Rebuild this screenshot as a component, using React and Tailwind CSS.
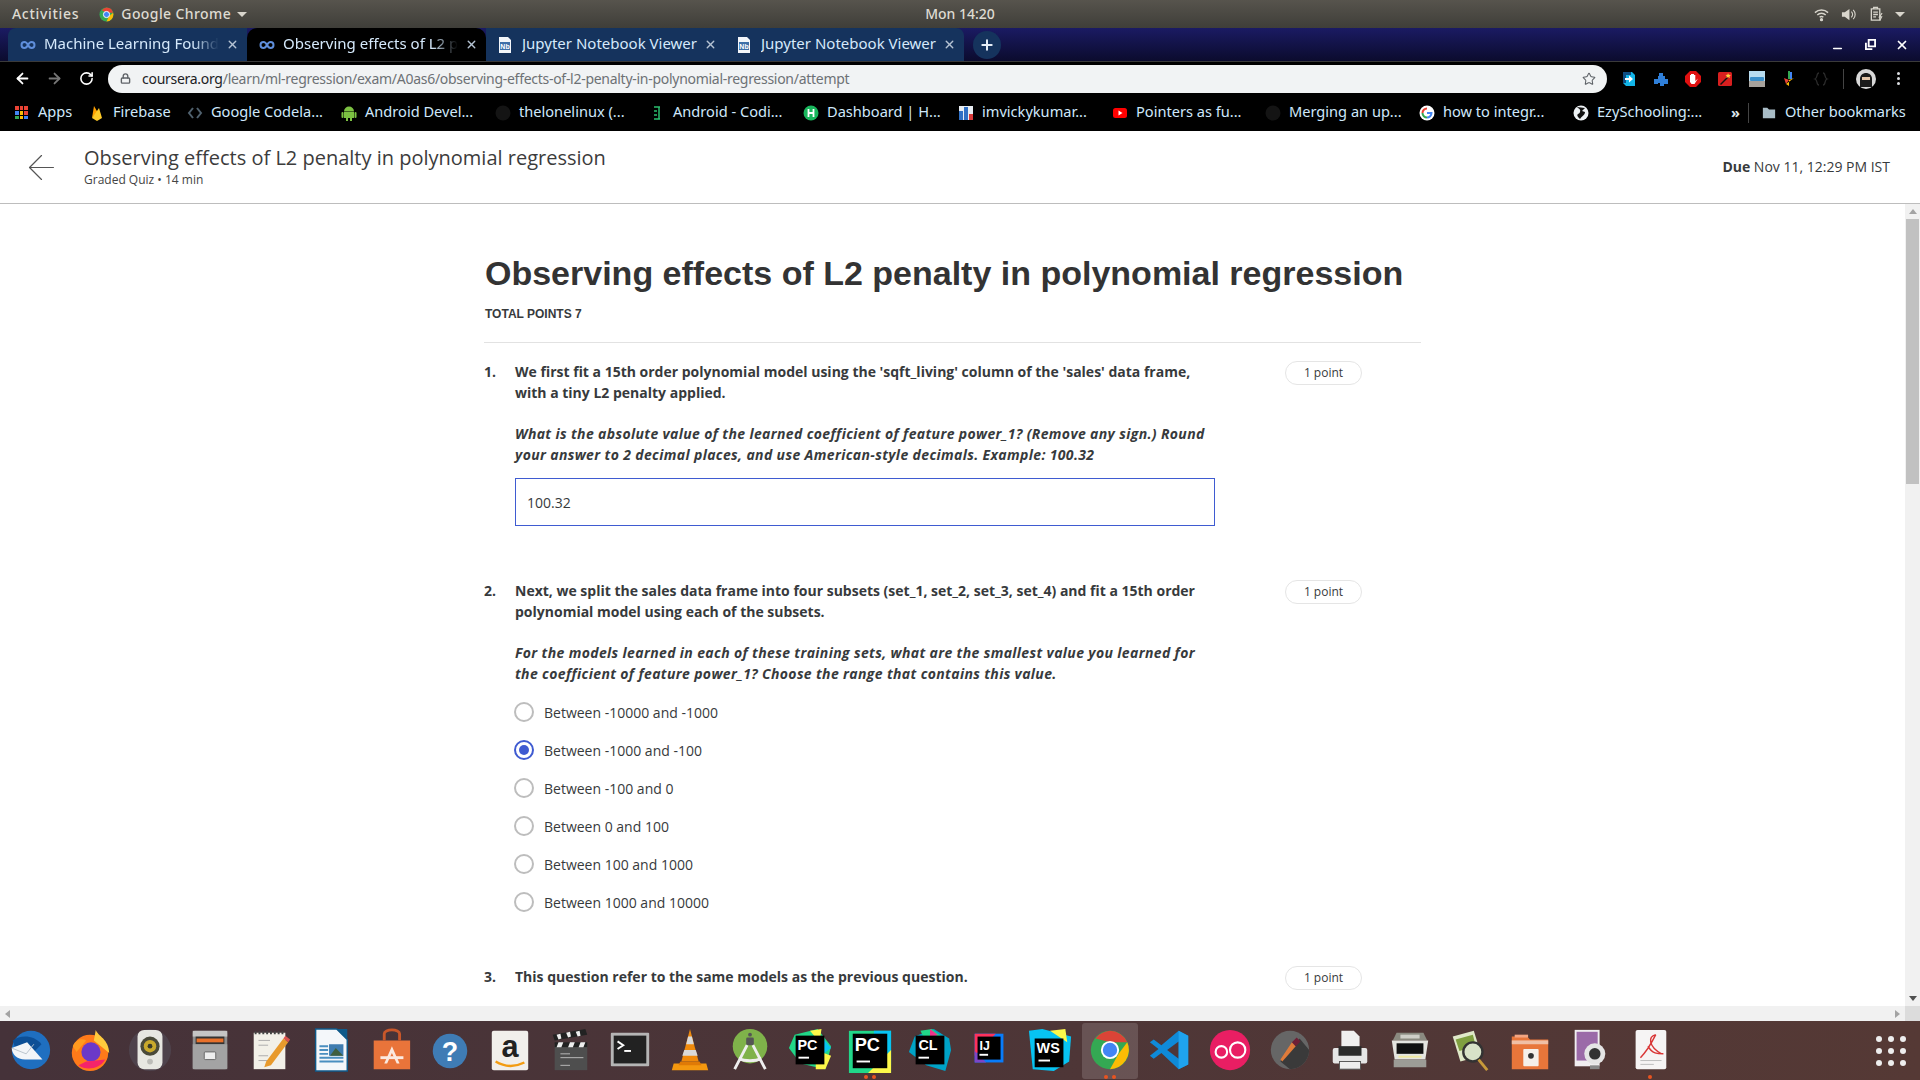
import React from 'react';
import { ArrowLeft, ArrowRight, RotateCw, Lock, Star, X, Plus, Minus } from 'lucide-react';

const bookmarks = [
  { name: 'Apps', icon: 'apps', w: 'w-[74px]', gap: 'gap-[10px]' },
  { name: 'Firebase', icon: 'firebase', w: 'w-[98px]' },
  { name: 'Google Codela...', icon: 'code', w: 'w-[154px]' },
  { name: 'Android Devel...', icon: 'android', w: 'w-[154px]' },
  { name: 'thelonelinux (...', icon: 'github', w: 'w-[154px]' },
  { name: 'Android - Codi...', icon: 'codi', w: 'w-[154px]' },
  { name: 'Dashboard | H...', icon: 'hash', w: 'w-[155px]' },
  { name: 'imvickykumar...', icon: 'bars', w: 'w-[154px]' },
  { name: 'Pointers as fu...', icon: 'youtube', w: 'w-[153px]' },
  { name: 'Merging an up...', icon: 'github', w: 'w-[154px]' },
  { name: 'how to integr...', icon: 'google', w: 'w-[154px]' },
  { name: 'EzySchooling:...', icon: 'globe', w: 'w-[160px]' },
];

const options = ['Between -10000 and -1000', 'Between -1000 and -100', 'Between -100 and 0', 'Between 0 and 100', 'Between 100 and 1000', 'Between 1000 and 10000'];

function CourseraMark() {
  return (
    <svg viewBox="0 0 16 16" className="w-4 h-4 shrink-0" fill="none" stroke="#5f8fdc" strokeWidth="2">
      <path d="M8 8c-1-2-2-3-3.500-3a3 3 0 0 0 0 6C6 11 7 10 8 8c1-2 2-3 3.500-3a3 3 0 0 1 0 6C10 11 9 10 8 8z" />
    </svg>
  );
}

function NotebookMark() {
  return (
    <svg viewBox="0 0 16 16" className="w-4 h-4 shrink-0">
      <path d="M2 0h9l3 3v13H2z" fill="#f3f6fa" />
      <rect x="3" y="5" width="10" height="8" fill="#3e6fa8" />
      <text x="8" y="12" fontSize="7" fontWeight="700" textAnchor="middle" fill="#fff" fontFamily="Liberation Sans">Nb</text>
    </svg>
  );
}

function Tab({ title, active, notebook, fade, rounded }) {
  return (
    <div className={`relative flex items-center h-full w-[239px] shrink-0 ${notebook ? 'pl-[11px]' : 'pl-[12px]'} pr-[8px] ${active ? 'bg-black rounded-t-[10px]' : 'bg-[#15335d]'} ${rounded || ''}`}>
      {notebook ? <NotebookMark /> : <CourseraMark />}
      <span className={`flex-1 min-w-0 overflow-hidden whitespace-nowrap text-[15px] -translate-y-[1px] text-[#d5e9fb] ${notebook ? 'ml-[9px]' : 'ml-[8px]'} ${fade ? '[mask-image:linear-gradient(to_right,black_82%,transparent_96%)]' : ''}`}>{title}</span>
      <X size={13} strokeWidth={2.5} className="text-[#b5c3d3] shrink-0" />
    </div>
  );
}

function BookmarkIcon({ type }) {
  if (type === 'apps') {
    const c = ['#ea4335', '#ea4335', '#ea4335', '#4285f4', '#fbbc05', '#ea4335', '#34a853', '#fbbc05', '#4285f4'];
    return (
      <div className="grid grid-cols-3 gap-[1px] w-[13px] h-[13px] shrink-0">
        {c.map((col, i) => <div key={i} style={{ background: col }} />)}
      </div>
    );
  }
  const paths = {
    firebase: <><path d="M3 13 5 1l3.500 6z" fill="#ffa000" /><path d="M3 13 10 3l3 10-5 3z" fill="#ffca28" /></>,
    code: <path d="M6 3 2 8l4 5M10 3l4 5-4 5" fill="none" stroke="#50616e" strokeWidth="2" />,
    android: <><path d="M3 6.500a5 5 0 0 1 10 0z" fill="#7cc142" /><rect x="3" y="7" width="10" height="6" fill="#7cc142" /><rect x="0.500" y="7" width="2" height="6" rx="1" fill="#7cc142" /><rect x="13.500" y="7" width="2" height="6" rx="1" fill="#7cc142" /><rect x="5" y="12" width="2" height="4" fill="#7cc142" /><rect x="9" y="12" width="2" height="4" fill="#7cc142" /></>,
    github: <circle cx="8" cy="8" r="7.500" fill="#141414" />,
    codi: <path d="M5 2h6M10 2v12M5 14h6M5 6h3M5 10h3" fill="none" stroke="#2bbd6e" strokeWidth="1.500" />,
    hash: <><circle cx="8" cy="8" r="7.500" fill="#19b65c" /><path d="M5.500 4v8M10.500 4v8M5 8h6" stroke="#fff" strokeWidth="1.800" /></>,
    bars: <><rect x="1" y="1" width="14" height="14" fill="#e8edf3" /><rect x="1" y="6" width="4" height="9" fill="#2f6fc4" /><rect x="6" y="2" width="4" height="13" fill="#2f6fc4" /><rect x="11" y="9" width="4" height="6" fill="#d93a3a" /></>,
    youtube: <><rect x="1" y="3" width="14" height="10" rx="2.500" fill="#f00" /><path d="M6.500 5.500v5l4-2.500z" fill="#fff" /></>,
    google: <><circle cx="8" cy="8" r="7.500" fill="#fff" /><path d="M8 3.500A4.500 4.500 0 0 0 3.500 8" stroke="#ea4335" strokeWidth="2" fill="none" /><path d="M3.500 8A4.500 4.500 0 0 0 8 12.500" stroke="#34a853" strokeWidth="2" fill="none" /><path d="M8 12.500A4.500 4.500 0 0 0 12.500 8H8" stroke="#4285f4" strokeWidth="2" fill="none" /></>,
    globe: <><circle cx="8" cy="8" r="7.500" fill="#eef2f5" /><path d="M4 2c2 2 4 2 3 5S3 8 5 12l2 2c2-3 5-4 5-7L9 6l3-3z" fill="#111" /></>,
  };
  return <svg viewBox="0 0 16 16" className="w-4 h-4 shrink-0">{paths[type]}</svg>;
}

function ExtIcon({ children }) {
  return <svg viewBox="0 0 16 16" className="w-4 h-4">{children}</svg>;
}

function TopBar() {
  return (
    <div className="relative h-[28px] shrink-0 flex items-center bg-gradient-to-b from-[#57544d] to-[#3f3e39] text-[14px] font-medium text-[#dedbd2] font-['Noto_Sans',sans-serif]">
      <span className="ml-[12px] tracking-[0.7px] -translate-y-[1px]">Activities</span>
      <svg viewBox="0 0 16 16" className="w-[15px] h-[15px] ml-[20px]">
        <circle cx="8" cy="8" r="7.500" fill="#34a853" />
        <path d="M8 .500A7.500 7.500 0 0 1 15 6H8L3 3.500A7.500 7.500 0 0 1 8 .500z" fill="#ea4335" />
        <path d="M15 6a7.500 7.500 0 0 1-7 9.500L10.500 10z" fill="#fbbc05" />
        <circle cx="8" cy="8" r="3.300" fill="#4285f4" stroke="#fff" />
      </svg>
      <span className="ml-[7px] tracking-[0.4px] -translate-y-[1px]">Google Chrome</span>
      <div className="ml-[6px] w-0 h-0 border-x-[5px] border-x-transparent border-t-[5px] border-t-[#d8d5cc]" />
      <span className="absolute left-1/2 -translate-x-1/2 -translate-y-[1px]">Mon 14:20</span>
      <div className="ml-auto flex items-center text-[#d8d5cc]">
        <svg viewBox="0 0 16 16" className="w-[15px] h-[15px]" fill="none" stroke="currentColor" strokeWidth="1.500">
          <path d="M1 6a10 10 0 0 1 14 0M3.500 8.500a6.500 6.500 0 0 1 9 0M6 11a3 3 0 0 1 4 0" /><circle cx="8" cy="13.500" r="1" fill="currentColor" />
        </svg>
        <svg viewBox="0 0 16 16" className="w-[15px] h-[15px] ml-[12px]" fill="currentColor">
          <path d="M1 5.500h3L9 2v12L4 10.500H1z" /><path d="M11 5a4 4 0 0 1 0 6M13 3a7 7 0 0 1 0 10" fill="none" stroke="currentColor" strokeWidth="1.200" />
        </svg>
        <svg viewBox="0 0 16 16" className="w-[15px] h-[16px] ml-[13px]" fill="none" stroke="currentColor" strokeWidth="1.400">
          <path d="M2.500 2.500h9v12h-9zM5 1h4v1.500H5zM4.500 6h5M4.500 8.500h5M4.500 11h3" /><path d="M14 7 11 11h2.500L11.500 15" strokeWidth="1.200" />
        </svg>
        <div className="ml-[11px] mr-[15px] w-0 h-0 border-x-[5px] border-x-transparent border-t-[5px] border-t-[#d8d5cc]" />
      </div>
    </div>
  );
}

function TabStrip() {
  return (
    <div className="h-[33px] shrink-0 flex items-center bg-gradient-to-b from-[#1b1b63] to-[#0b0b2e] font-['Noto_Sans',sans-serif]">
      <div className="w-[8px] h-full" />
      <Tab title="Machine Learning Foundat" fade rounded="rounded-tl-lg" />
      <Tab title="Observing effects of L2 penalt" active fade />
      <Tab title="Jupyter Notebook Viewer" notebook />
      <div className="flex items-center h-full">
        <div className="w-px h-[20px] bg-[#5b6f8c] -ml-px" />
      </div>
      <Tab title="Jupyter Notebook Viewer" notebook rounded="rounded-tr-lg" />
      <div className="w-[28px] h-[28px] rounded-full bg-[#15335d] flex items-center justify-center ml-[9px]">
        <Plus size={16} strokeWidth={3} className="text-[#e6eef7]" />
      </div>
      <div className="ml-auto flex items-center text-white">
        <Minus size={13} strokeWidth={3} className="translate-y-[4px]" />
        <svg viewBox="0 0 12 12" className="w-[11px] h-[11px] ml-[21px]" fill="none" stroke="currentColor" strokeWidth="2"><path d="M4 1h7v7H4zM1 4v7h7" /></svg>
        <X size={14} strokeWidth={3} className="ml-[19px] mr-[11px]" />
      </div>
    </div>
  );
}

function Toolbar() {
  return (
    <div className="h-[34px] shrink-0 bg-black border-t border-t-[#3a3a3a] flex items-center font-['Noto_Sans',sans-serif]">
      <ArrowLeft size={17} strokeWidth={2.5} className="text-white ml-[14px]" />
      <ArrowRight size={17} strokeWidth={2.5} className="text-[#777] ml-[15px]" />
      <RotateCw size={15} strokeWidth={2.5} className="text-white ml-[16px]" />
      <div className="ml-[14px] w-[1499px] h-[28px] rounded-full bg-[#f1f3f4] flex items-center pl-[12px] pr-[11px]">
        <Lock size={11} strokeWidth={3} className="text-[#5f6368]" />
        <span className="ml-[11px] text-[14px] tracking-[-0.28px] whitespace-nowrap">
          <span className="text-[#202124]">coursera.org</span>
          <span className="text-[#6d7175]">/learn/ml-regression/exam/A0as6/observing-effects-of-l2-penalty-in-polynomial-regression/attempt</span>
        </span>
        <Star size={14} strokeWidth={1.8} className="ml-auto text-[#5f6368]" />
      </div>
      <div className="ml-[14px] flex items-center gap-[16px]">
        <ExtIcon><path d="M2 1h9l3 3v11H5l-3-3z" fill="#12b5e8" /><path d="M2 1h8v3H5v8H2z" fill="#0f4c81" /><path d="M4 7h4V4.500L12 8l-4 3.500V9H4z" fill="#fff" /></ExtIcon>
        <ExtIcon><path d="M6 2h4v3h2v3h3v5h-4v2H7v-3H5v1H1V8h4V5h1z" fill="#2f7fd9" /></ExtIcon>
        <ExtIcon><path d="M5 0h6l5 5v6l-5 5H5l-5-5V5z" fill="#e01010" /><path d="M5 7V4h1v3V3h1.500v4V3H9v4V4h1.300v6L13 7.500 9.500 13H6.500L5 11z" fill="#fff" /></ExtIcon>
        <ExtIcon><rect x="1" y="1" width="14" height="14" rx="1.500" fill="#d81f1f" /><path d="M3 13l7-7 1 1-7 7z" fill="#111" /><path d="M11 2l.8 1.800L14 4l-1.500 1.200L13 7l-2-1-1.500 1 .3-2L8.500 4l2-.2z" fill="#ffd33d" /></ExtIcon>
        <ExtIcon><rect width="16" height="16" fill="#b8dcf0" /><rect y="10" width="16" height="6" fill="#a7a29c" /><rect x="1" y="6" width="14" height="4" rx="1" fill="#3b8fca" /></ExtIcon>
        <ExtIcon><path d="M7 0h2v8H7z" fill="#34a853" /><path d="M9 1h2v7H9z" fill="#4285f4" /><path d="M3 7l5 2-3 4z" fill="#ea4335" /><path d="M13 7l-5 2 0 6-3-2z" fill="#fbbc05" /></ExtIcon>
        <ExtIcon><path d="M6 2C3 2 5 7 2 8c3 1 1 6 4 6M10 2c3 0 1 5 4 6-3 1-1 6-4 6" fill="none" stroke="#2a2a2a" strokeWidth="1.300" /></ExtIcon>
      </div>
      <div className="w-px h-[20px] bg-[#444] ml-[14px]" />
      <svg viewBox="0 0 20 20" className="w-5 h-5 ml-[12px]">
        <circle cx="10" cy="10" r="10" fill="#d8d8d8" /><path d="M4 10c0-4 3-6 6-6s6 2 6 6v8H4z" fill="#1b1b1b" /><rect x="6" y="8" width="8" height="3" fill="#e3c5a8" />
      </svg>
      <div className="ml-[21px] flex flex-col gap-[2px]">
        <div className="w-[3px] h-[3px] rounded-full bg-[#dadce0]" /><div className="w-[3px] h-[3px] rounded-full bg-[#dadce0]" /><div className="w-[3px] h-[3px] rounded-full bg-[#dadce0]" />
      </div>
    </div>
  );
}

function BookmarksBar() {
  return (
    <div className="h-[36px] shrink-0 bg-black flex items-center pl-[15px] text-[14.6px] text-[#cfe8fb] font-['Noto_Sans',sans-serif]">
      {bookmarks.map((b, i) => (
        <div key={i} className={`flex items-center ${b.gap || 'gap-[8px]'} ${b.w} shrink-0 whitespace-nowrap`}>
          <BookmarkIcon type={b.icon} />
          <span className="-translate-y-[1px]">{b.name}</span>
        </div>
      ))}
      <span className="font-bold text-[#dfe7ee] ml-[-2px]">»</span>
      <div className="w-px h-[20px] bg-[#444] ml-[8px]" />
      <svg viewBox="0 0 16 16" className="w-[14px] h-[14px] ml-[13px]"><path d="M1 2h5l2 2h7v10H1z" fill="#a8bcc6" /></svg>
      <span className="ml-[9px] whitespace-nowrap -translate-y-[1px]">Other bookmarks</span>
    </div>
  );
}

function Question({ n, bold, italic, children }) {
  return (
    <div className="flex items-start">
      <div className="w-[31px] shrink-0 text-[14px] leading-[21px] font-bold text-[#373a3c]">{n}.</div>
      <div className="w-[700px] shrink-0">
        <p className="text-[14px] leading-[21px] font-bold text-[#373a3c]">{bold}</p>
        {italic && <p className="mt-[20px] text-[14px] leading-[21px] font-bold italic tracking-[0.36px] text-[#373a3c]">{italic}</p>}
        {children}
      </div>
      <div className="ml-[70px] w-[77px] h-[24px] rounded-full border border-[#e5e5e5] flex items-center justify-center text-[12px] text-[#373a3c]">1 point</div>
    </div>
  );
}

function Radio({ label, checked }) {
  return (
    <div className="flex items-center h-[38px] -ml-px">
      <div className={`w-[20px] h-[20px] rounded-full border-2 flex items-center justify-center shrink-0 ${checked ? 'border-[#3f5bd1]' : 'border-[#bdbdbd]'}`}>
        {checked && <div className="w-[10px] h-[10px] rounded-full bg-[#3f5bd1]" />}
      </div>
      <span className="ml-[10px] text-[14px] text-[#373a3c]">{label}</span>
    </div>
  );
}

function Scrollbars() {
  return (
    <div className="w-[15px] shrink-0 bg-[#f1f1f1] flex flex-col items-center">
      <div className="h-[15px] flex items-center justify-center">
        <div className="w-0 h-0 border-x-[4px] border-x-transparent border-b-[5px] border-b-[#a3a3a3]" />
      </div>
      <div className="w-[13px] h-[265px] bg-[#c1c1c1]" />
      <div className="mt-auto h-[15px] flex items-center justify-center">
        <div className="w-0 h-0 border-x-[4px] border-x-transparent border-t-[5px] border-t-[#505050]" />
      </div>
    </div>
  );
}

const dockIcons = [
  <><circle cx="25" cy="24" r="20" fill="#1f6fc0" /><path d="M6 14c8-6 22-6 30 4l-8 8L8 20z" fill="#0d4f96" /><path d="M5 22l16-6 16 18-18 0C10 34 5 28 5 22z" fill="#f3f5f8" /><path d="M5 22l15 6 8-10" fill="none" stroke="#b9c2cc" /></>,
  <><circle cx="24" cy="27" r="19" fill="#ff7a1a" /><path d="M30 3c2 6 14 10 14 24L28 14z" fill="#ffcb3d" /><path d="M6 20c4-8 10-8 14-6L10 26z" fill="#ff9a1f" /><circle cx="25" cy="26" r="10" fill="#6b39c8" /><path d="M12 40c8 6 22 4 28-6l-20 2z" fill="#f5246a" /></>,
  <><circle cx="24" cy="24" r="22" fill="#5a5a68" opacity=".4" /><rect x="11" y="3" width="26" height="41" rx="7" fill="#e7e7e2" /><circle cx="24" cy="20" r="10" fill="#4a4a3a" /><circle cx="24" cy="20" r="6.500" fill="#c9a92c" /><circle cx="24" cy="20" r="2.500" fill="#3a3a2a" /><circle cx="24" cy="36" r="3" fill="#bcbcb8" /></>,
  <><rect x="6" y="4" width="36" height="40" rx="2" fill="#8f8f8f" /><rect x="6" y="4" width="36" height="6" fill="#c5c5c5" /><rect x="9" y="10" width="30" height="8" fill="#333" /><rect x="10" y="12" width="28" height="4" fill="#e8702a" /><rect x="6" y="18" width="36" height="26" fill="#a3a3a3" /><rect x="18" y="26" width="12" height="8" rx="1" fill="#eee" stroke="#666" /></>,
  <><rect x="7" y="6" width="33" height="38" fill="#f2f0e8" /><path d="M8 6h32" stroke="#444" strokeWidth="3" strokeDasharray="2 2" /><path d="M12 14h12M12 19h10M12 30h10M12 35h14" stroke="#aaa" /><path d="M20 36 38 12l5 4-18 24-7 2z" fill="#e89a2c" /><path d="M38 12l2-3 5 4-2 3z" fill="#d9534f" /></>,
  <><path d="M9 2h22l11 11v33H9z" fill="#f4f7fa" stroke="#0f5a8a" strokeWidth="1.500" /><path d="M31 2h11v11z" fill="#0f5a8a" /><rect x="23" y="18" width="15" height="12" fill="#3e7cb0" /><path d="M24 30l6-8 4 4 4 4z" fill="#3f5f3f" /><path d="M13 20h9M13 24h9M13 28h9M13 32h25M13 36h25" stroke="#4a8fc0" strokeWidth="2" /></>,
  <><path d="M7 14h38l0 30H7z" fill="#e9743a" /><path d="M18 14V7a8 4 0 0 1 16 0v7" fill="none" stroke="#c9572a" strokeWidth="3" /><path d="M26 20l-8 18h3l5-11 5 11h3z" fill="#fbe9df" /><path d="M14 32h24" stroke="#fbe9df" strokeWidth="3" /></>,
  <><circle cx="24" cy="25" r="18" fill="#3f7cb5" /><text x="24" y="35" textAnchor="middle" fontSize="28" fontWeight="700" fill="#fff" fontFamily="Liberation Sans">?</text></>,
  <><rect x="5" y="4" width="38" height="41" rx="2" fill="#f1efeb" /><text x="24" y="31" textAnchor="middle" fontSize="32" fontWeight="700" fill="#222" fontFamily="Liberation Sans">a</text><path d="M9 36c10 6 20 6 30 1" fill="none" stroke="#f39c12" strokeWidth="2.500" /></>,
  <><rect x="8" y="18" width="34" height="27" fill="#4e4e4e" /><path d="M6 8 40 2l2 6-34 6z" fill="#222" /><path d="M10 8l4-1 1 5-3 1zM20 6l4-1 1 5-3 1zM30 5l4-1 1 5-3 1z" fill="#eee" /><rect x="8" y="16" width="34" height="5" fill="#222" /><path d="M12 16h5l-2 5h-5zM24 16h5l-2 5h-5zM35 16h5l-2 5h-5z" fill="#eee" /><path d="M14 28h10M14 32h24M14 40h10" stroke="#bbb" /></>,
  <><rect x="4" y="6" width="40" height="35" rx="1" fill="#b5b5b5" /><rect x="7" y="9" width="34" height="29" fill="#222" /><path d="M11 15l6 4-6 4" fill="none" stroke="#fff" strokeWidth="2" /><path d="M18 25h7" stroke="#fff" strokeWidth="2" /></>,
  <><path d="M24 2l9 34H15z" fill="#f08a0c" /><path d="M22 10h4l2 8h-8zM18 24h12l2 6H16z" fill="#d9d9d9" /><path d="M7 38h34l2 7H5z" fill="#f4980f" /><path d="M14 36h20l2 4H12z" fill="#e07a06" /></>,
  <><circle cx="24" cy="20" r="18" fill="#7fb24a" /><rect x="20" y="11" width="8" height="8" rx="1.500" fill="#555" /><circle cx="24" cy="8" r="2" fill="#555" /><path d="M21 19 8 44M27 19l13 25M12 33c7 3 17 3 24 0" fill="none" stroke="#eee" strokeWidth="3" /></>,
  <><path d="M8 8l24-6 14 18-6 24-26-6-12-16z" fill="#21d789" /><path d="M24 4l12-2-2 14z" fill="#fcf84a" /><path d="M30 44l10 0 6-14-16-6z" fill="#fcf84a" /><path d="M36 10l10 12-8 6z" fill="#07c3f2" /><rect x="9" y="9" width="30" height="30" fill="#000" /><text x="11" y="24" fontSize="15" fontWeight="700" fill="#fff" fontFamily="Liberation Sans">PC</text><rect x="12" y="31" width="11" height="2" fill="#fff" /></>,
  <><rect x="2" y="4" width="44" height="44" fill="#21d789" /><path d="M28 4h18v36H30z" fill="#07c3f2" /><path d="M22 48l24-24v24z" fill="#fcf84a" /><rect x="6" y="7" width="36" height="36" fill="#000" /><text x="8" y="25" fontSize="19" fontWeight="700" fill="#fff" fontFamily="Liberation Sans">PC</text><rect x="10" y="35" width="14" height="2" fill="#fff" /></>,
  <><path d="M8 10l20-8 16 10 2 12-6 22-20-6L2 26z" fill="#00a3c7" /><path d="M14 4l12-2 10 8-18 2z" fill="#21d789" /><path d="M24 2l8 6-8 4z" fill="#ed358c" /><rect x="9" y="9" width="30" height="30" fill="#000" /><text x="12" y="24" fontSize="15" fontWeight="700" fill="#fff" fontFamily="Liberation Sans">CL</text><rect x="12" y="31" width="11" height="2" fill="#fff" /></>,
  <><rect x="8" y="7" width="30" height="30" fill="#087cfa" /><path d="M8 7h22L8 30z" fill="#fe315d" /><path d="M8 37V25l12 12z" fill="#7d45c7" /><rect x="11" y="10" width="24" height="24" fill="#000" /><text x="13" y="24" fontSize="13" fontWeight="700" fill="#fff" fontFamily="Liberation Sans">IJ</text><rect x="13" y="28" width="9" height="2" fill="#fff" /></>,
  <><path d="M2 4l14-2 30 8-2 26-16 10-22-2z" fill="#07c3f2" /><path d="M24 4l16-2 2 14z" fill="#fcf84a" /><rect x="8" y="12" width="30" height="30" fill="#000" /><text x="10" y="27" fontSize="15" fontWeight="700" fill="#fff" fontFamily="Liberation Sans">WS</text><rect x="12" y="34" width="12" height="2" fill="#fff" /></>,
  <><circle cx="24" cy="24" r="20" fill="#34a853" /><path d="M24 4a20 20 0 0 1 18 12H24L9 12A20 20 0 0 1 24 4z" fill="#db4437" /><path d="M42 16a20 20 0 0 1-18 28l9-16z" fill="#fbbc05" /><circle cx="24" cy="24" r="9.500" fill="#fff" /><circle cx="24" cy="24" r="7.500" fill="#4285f4" /></>,
  <><path d="M33 4l10 5v30l-10 5-18-17-8 6-4-3 9-7-9-7 4-3 8 6z" fill="#0f8ad8" /><path d="M33 15v18l-12-9z" fill="#4e3638" /><path d="M33 4l10 5v30l-10 5z" fill="#1fa3ee" /></>,
  <><circle cx="24" cy="24" r="21" fill="#e91e63" /><circle cx="15" cy="26" r="6" fill="none" stroke="#fff" strokeWidth="2.200" /><circle cx="32" cy="24" r="8" fill="none" stroke="#fff" strokeWidth="2.200" /></>,
  <><circle cx="24" cy="24" r="20" fill="#666" /><path d="M24 44a20 20 0 0 0 20-20L34 12 14 36z" fill="#3a3a3a" /><path d="M14 34l2 2 14-16-4-4z" fill="#e07b3a" /><path d="M26 16l4 4 5-5-4-4z" fill="#6e1f36" /></>,
  <><path d="M15 4h13l6 6v16H15z" fill="#f0f0f0" /><rect x="6" y="22" width="36" height="16" rx="2" fill="#e6e6e6" /><rect x="12" y="20" width="24" height="10" fill="#2b2b2b" /><rect x="13" y="36" width="22" height="8" fill="#eee" stroke="#555" /></>,
  <><path d="M10 6h28l4 8H6z" fill="#8a8a80" /><rect x="14" y="8" width="20" height="4" fill="#cfcfc8" /><path d="M5 14h38l-3 20H8z" fill="#e5e5e0" /><rect x="10" y="17" width="28" height="11" fill="#111" /><rect x="7" y="34" width="34" height="8" fill="#9c9c96" /><rect x="12" y="30" width="24" height="2" fill="#f0e9a0" /></>,
  <><path d="M6 10l22-6 8 26-22 6z" fill="#dfe8c8" /><path d="M9 13l18-5 3 12-17 5z" fill="#7fa040" /><circle cx="27" cy="26" r="10" fill="#d8e2c8" stroke="#333" strokeWidth="2.500" /><path d="M33 34l9 11" stroke="#c89a3a" strokeWidth="3" /></>,
  <><path d="M5 10h16l3 3h19v31H5z" fill="#e8763a" /><rect x="8" y="8" width="14" height="3" fill="#f2a582" /><rect x="5" y="14" width="38" height="4" fill="#f0c0a5" /><rect x="17" y="23" width="16" height="18" rx="1" fill="#f5f0ea" /><circle cx="25" cy="30" r="3" fill="#333" /></>,
  <><rect x="8" y="3" width="26" height="38" fill="#f0eef0" /><rect x="10" y="5" width="22" height="30" fill="#9b6aa8" /><circle cx="29" cy="28" r="11" fill="#e5e5e5" /><circle cx="29" cy="28" r="6" fill="#333" /><rect x="24" y="40" width="10" height="4" fill="#888" /></>,
  <><rect x="9" y="3" width="32" height="41" rx="2" fill="#f6f4f4" /><path d="M30 8c-8 2-8 12 6 20M30 8c-4 8-8 16-16 24M22 20c4 8 10 8 16 8" fill="none" stroke="#d93636" strokeWidth="1.500" /><path d="M14 35h22M14 39h14" stroke="#bbb" /></>,
];

function DockItem({ icon, index }) {
  const running = { 14: 2, 18: 2, 27: 1 }[index] || 0;
  return (
    <div className="relative w-[60px] h-full shrink-0 flex items-center justify-center">
      {index === 18 && <div className="absolute left-[2px] right-[2px] top-[2px] bottom-[1px] rounded-[3px] bg-white/15" />}
      <svg viewBox="0 0 48 48" className="relative w-[46px] h-[46px] -translate-y-[1px]">{icon}</svg>
      {running > 0 && (
        <div className="absolute bottom-[1px] left-0 right-0 flex justify-center gap-[4px]">
          {Array.from({ length: running }).map((_, i) => <div key={i} className="w-[4px] h-[4px] rounded-full bg-[#e95420]" />)}
        </div>
      )}
    </div>
  );
}

export default function App() {
  return (
    <div className="h-screen w-full overflow-hidden flex flex-col bg-white font-['Open_Sans',sans-serif]">
      <TopBar />
      <TabStrip />
      <Toolbar />
      <BookmarksBar />

      <div className="h-[73px] shrink-0 border-b border-b-[#bdbdbd] flex items-center">
        <ArrowLeft size={41} strokeWidth={0.7} className="text-[#555] ml-[21px]" />
        <div className="ml-[22px]">
          <div className="text-[20px] leading-[26px] text-[#3c3c3c] -translate-y-[1px]">Observing effects of L2 penalty in polynomial regression</div>
          <div className="text-[12px] leading-[16px] text-[#444]">Graded Quiz • 14 min</div>
        </div>
        <div className="ml-auto mr-[30px] text-[14px] text-[#373a3c] -translate-y-[1px]"><b>Due</b> Nov 11, 12:29 PM IST</div>
      </div>

      <div className="flex-1 min-h-0 flex">
        <div className="flex-1 min-w-0 overflow-hidden">
          <div className="w-[937px] mx-auto pt-[46px]">
            <h1 className="pl-px font-['Liberation_Sans',sans-serif] font-bold text-[34px] leading-[46px] text-[#333] whitespace-nowrap">Observing effects of L2 penalty in polynomial regression</h1>
            <div className="mt-[10px] pl-px font-['Liberation_Sans',sans-serif] font-bold text-[12px] leading-[16px] text-[#373a3c]">TOTAL POINTS 7</div>
            <div className="mt-[20px] border-t border-t-[#e2e2e2]" />
            <div className="mt-[18px] flex flex-col">
              <Question n={1} bold="We first fit a 15th order polynomial model using the 'sqft_living' column of the 'sales' data frame, with a tiny L2 penalty applied." italic="What is the absolute value of the learned coefficient of feature power_1? (Remove any sign.) Round your answer to 2 decimal places, and use American-style decimals. Example: 100.32">
                <div className="mt-[13px] h-[48px] border border-[#3f5bd1] flex items-center pl-[11px] text-[14px] text-[#373a3c]">100.32</div>
              </Question>
              <div className="mt-[54px]">
                <Question n={2} bold="Next, we split the sales data frame into four subsets (set_1, set_2, set_3, set_4) and fit a 15th order polynomial model using each of the subsets." italic="For the models learned in each of these training sets, what are the smallest value you learned for the coefficient of feature power_1? Choose the range that contains this value.">
                  <div className="mt-[9px]">
                    {options.map((o, i) => <Radio key={o} label={o} checked={i === 1} />)}
                  </div>
                </Question>
              </div>
              <div className="mt-[45px]">
                <Question n={3} bold="This question refer to the same models as the previous question." />
              </div>
            </div>
          </div>
        </div>
        <Scrollbars />
      </div>

      <div className="h-[15px] shrink-0 flex bg-[#f1f1f1]">
        <div className="flex-1 flex items-center justify-between px-[5px]">
          <div className="w-0 h-0 border-y-[4px] border-y-transparent border-r-[5px] border-r-[#a3a3a3]" />
          <div className="w-0 h-0 border-y-[4px] border-y-transparent border-l-[5px] border-l-[#a3a3a3]" />
        </div>
        <div className="w-[15px] bg-[#dcdcdc]" />
      </div>

      <div className="h-[59px] shrink-0 flex items-center bg-gradient-to-r from-[#453239] to-[#553935]">
        {dockIcons.map((icon, i) => <DockItem key={i} icon={icon} index={i} />)}
        <div className="ml-auto mr-[14px] grid grid-cols-3 gap-x-[6px] gap-y-[6px]">
          {Array.from({ length: 9 }).map((_, i) => <div key={i} className="w-[6px] h-[6px] rounded-full bg-[#eeeeee]" />)}
        </div>
      </div>
    </div>
  );
}
